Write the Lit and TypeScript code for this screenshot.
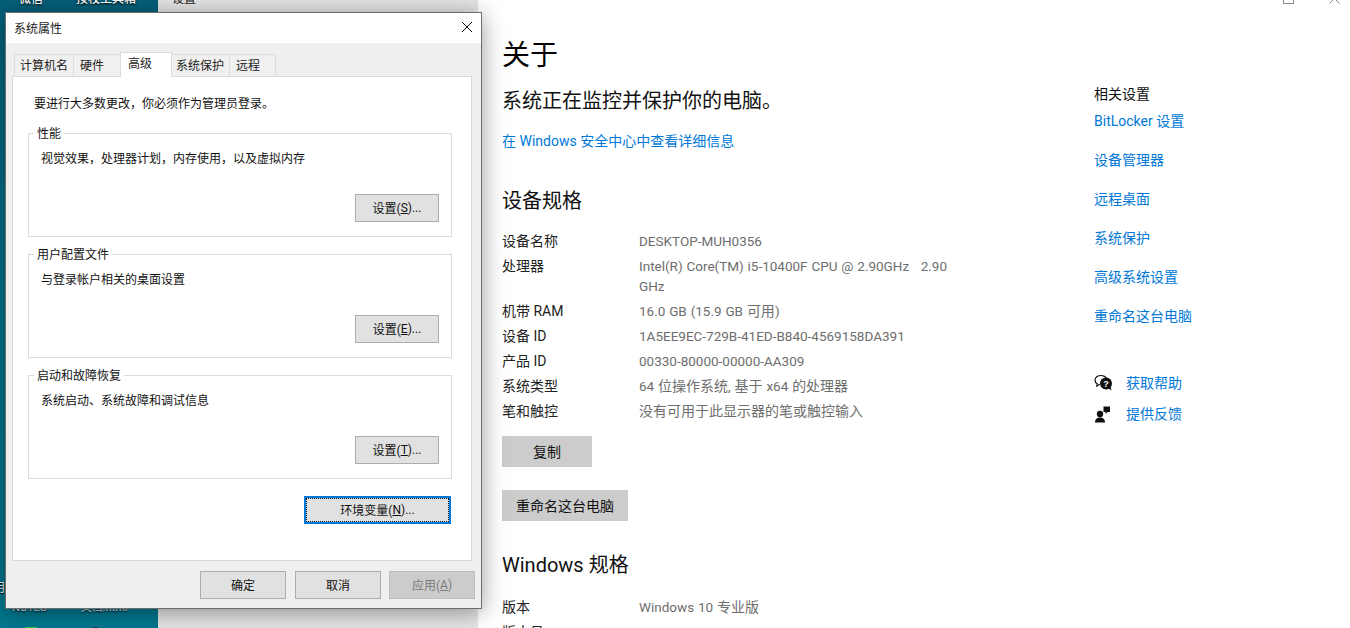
import { LitElement, html, css } from "lit";
import { customElement } from "lit/decorators.js";

const FONT = css`Roboto, "Noto Sans CJK SC", sans-serif`;

@customElement("sys-group")
class SysGroup extends LitElement {
  static properties = { title: {}, desc: {}, btn: {}, key: {} };
  title = "";
  desc = "";
  btn = "设置";
  key = "";
  static styles = css`
    :host { display: block; }
    .box { position: relative; height: 102px; border: 1px solid #dcdcdc; box-sizing: content-box; padding: 0 12px; display: flex; flex-direction: column; }
    .legend { position: absolute; left: 5px; top: -8px; background: #fff; padding: 0 3px; font-size: 12px; line-height: 17px; color: #111; }
    .desc { margin-top: 17px; font-size: 12px; line-height: 17px; color: #111; }
    .row { margin-top: auto; margin-bottom: 14px; display: flex; justify-content: flex-end; }
    .btn { width: 84px; height: 28px; box-sizing: border-box; border: 1px solid #adadad; background: #e1e1e1; padding-bottom: 1px; display: flex; align-items: center; justify-content: center; font-size: 12px; color: #111; white-space: pre; }
    u { text-underline-offset: 1px; }
  `;
  render() {
    return html`<div class="box">
      <span class="legend">${this.title}</span>
      <div class="desc">${this.desc}</div>
      <div class="row"><div class="btn">${this.btn}(<u>${this.key}</u>)...</div></div>
    </div>`;
  }
}

@customElement("app-root")
export class AppRoot extends LitElement {
  static styles = css`
    :host { display: block; width: 1350px; height: 628px; overflow: hidden; position: relative; background: #fff; font-family: ${FONT}; color: #111; }
    .desk { display: flex; height: 628px; }
    .wall { width: 158px; background: linear-gradient(180deg, #04607a 0%, #03738c 50%, #02788f 100%); color: #fff; font-size: 12px; display: flex; flex-direction: column; overflow: hidden; }
    .deskTop { display: flex; gap: 33px; padding-left: 19px; margin-top: -9px; line-height: 17px; font-weight: 500; text-shadow: 0 1px 2px #000; }
    .deskMid { margin-top: auto; margin-left: -7px; line-height: 14px; text-shadow: 0 1px 1px #000; }
    .deskBot { display: flex; gap: 34px; margin-top: 6px; padding-left: 12px; font-size: 11px; line-height: 14px; color: #dde; text-shadow: 0 1px 2px #000; }
    .deskIcons { display: flex; margin-top: 12px; padding-left: 25px; height: 1px; gap: 56px; flex: none; }
    .deskIcons i { display: block; height: 1px; }
    .deskIcons .g { width: 12px; background: #3fc13f; }
    .deskIcons .d { width: 5px; background: #1c3a48; }
    .settings { flex: 1; display: flex; flex-direction: column; min-width: 0; }
    .sTitle { height: 12px; display: flex; align-items: flex-end; position: relative; background: #e6e6e6; margin-right: 872px; }
    .sTitle span { font-size: 12px; line-height: 17px; margin: 0 0 4px 14px; color: #222; }
    .winBtns { position: absolute; top: -7px; right: -862px; display: flex; gap: 35px; }
    .winBtns svg { display: block; }
    .sBody { flex: 1; display: flex; min-height: 0; }
    .nav { width: 320px; background: #e6e6e6; flex: none; }
    .main { width: 592px; padding: 26px 0 0 24px; flex: none; box-sizing: border-box; }
    h1 { margin: 0; font-weight: 400; font-size: 28px; line-height: 36px; color: #000; }
    .lead { margin-top: 14px; font-size: 20px; line-height: 26px; color: #111; }
    a { color: #0078d7; text-decoration: none; }
    .secLink { display: block; margin-top: 17px; font-size: 14px; line-height: 20px; }
    h2 { margin: 0; font-weight: 400; font-size: 20px; line-height: 28px; color: #111; }
    .h2a { margin-top: 36px; }
    .specs { margin-top: 16px; display: grid; grid-template-columns: 137px 316px; font-size: 14px; line-height: 20px; row-gap: 5px; }
    .specs .k { color: #222; }
    .specs .v { color: #6e6e6e; white-space: pre-wrap; }
    .lat { font-size: 13.5px; line-height: 14px; word-spacing: .5px; }
    .gray { display: flex; align-items: center; justify-content: center; height: 31px; box-sizing: border-box; padding-bottom: 2px; background: #cccccc; font-size: 14px; color: #111; }
    .copy { width: 90px; margin-top: 15px; }
    .rename { width: 126px; margin-top: 23px; }
    .h2b { margin-top: 30px; }
    .specs2 { margin-top: 18px; }
    .side { flex: 1; padding: 72px 0 0 24px; font-size: 14px; }
    .sideH { line-height: 20px; color: #111; }
    .links { display: flex; flex-direction: column; gap: 19px; margin-top: 7px; }
    .links a { line-height: 20px; }
    .help { margin-top: 47px; display: flex; flex-direction: column; gap: 11px; }
    .help a { display: flex; align-items: center; gap: 13px; line-height: 20px; }
    .help svg { flex: none; display: block; }

    .dialog { position: absolute; left: 5px; top: 12px; width: 477px; height: 597px; box-sizing: border-box; background: #efefef; border: 1px solid #6d6d6d; box-shadow: 0 3px 22px rgba(0,0,0,.4); display: flex; flex-direction: column; font-size: 12px; }
    .dTitle { height: 30px; box-sizing: border-box; background: #fff; display: flex; align-items: center; justify-content: space-between; padding: 0 8px 2px 8px; color: #222; }
    .dTitle svg { display: block; }
    .tabs { height: 24px; margin-top: 9px; padding-left: 9px; display: flex; align-items: flex-end; }
    .tab { height: 22px; box-sizing: border-box; background: #f0f0f0; border: 1px solid #dcdcdc; border-bottom: 0; margin-left: -1px; padding-bottom: 2px; display: flex; align-items: center; font-size: 12px; color: #222; }
    .t1 { width: 60px; padding-left: 5px; }
    .t2 { width: 48px; padding-left: 6px; }
    .t3 { width: 52px; padding-left: 7px; }
    .t4 { width: 59px; padding-left: 4px; }
    .t5 { width: 47px; padding-left: 6px; }
    .tab.on { height: 25px; background: #fff; padding-bottom: 6px; position: relative; z-index: 1; margin-bottom: -1px; }
    .page { width: 460px; height: 485px; box-sizing: border-box; margin-left: 6px; background: #fff; border: 1px solid #d9d9d9; padding: 0 19px 0 15px; display: flex; flex-direction: column; }
    .notice { margin: 19px 0 0 6px; line-height: 17px; }
    .groups { margin-top: 20px; display: flex; flex-direction: column; gap: 17px; }
    .envRow { margin-top: 17px; display: flex; justify-content: flex-end; padding-right: 1px; }
    .env { width: 147px; height: 28px; box-sizing: border-box; border: 2px solid #0078d7; background: #e1e1e1; outline: 1px dotted #111; outline-offset: -3px; padding-bottom: 1px; display: flex; align-items: center; justify-content: center; white-space: pre; }
    .foot { flex: 1; display: flex; justify-content: flex-end; align-items: flex-start; gap: 8px; padding: 10px 6px 0 0; }
    .fbtn { width: 86px; height: 28px; box-sizing: border-box; border: 1px solid #adadad; background: #e1e1e1; padding-bottom: 1px; display: flex; align-items: center; justify-content: center; }
    .fbtn.first { margin-right: 1px; }
    .fbtn.dis { background: #cccccc; border-color: #bfbfbf; color: #7a7a7a; }
    u { text-underline-offset: 1px; }
  `;

  private latin(text: string) {
    return text.split(/([\x20-\x7e]+)/).map((part) =>
      /[\x21-\x7e]/.test(part) ? html`<span class="lat">${part}</span>` : part
    );
  }

  render() {
    const specs: [string, string][] = [
      ["设备名称", "DESKTOP-MUH0356"],
      ["处理器", "Intel(R) Core(TM) i5-10400F CPU @ 2.90GHz   2.90 GHz"],
      ["机带 RAM", "16.0 GB (15.9 GB 可用)"],
      ["设备 ID", "1A5EE9EC-729B-41ED-B840-4569158DA391"],
      ["产品 ID", "00330-80000-00000-AA309"],
      ["系统类型", "64 位操作系统, 基于 x64 的处理器"],
      ["笔和触控", "没有可用于此显示器的笔或触控输入"],
    ];
    const links = ["BitLocker 设置", "设备管理器", "远程桌面", "系统保护", "高级系统设置", "重命名这台电脑"];
    return html`
      <div class="desk">
        <div class="wall">
          <div class="deskTop"><span>微信</span><span>按校工具箱</span></div>
          <div class="deskMid">用</div>
          <div class="deskBot"><span>NOTES</span><span>文档.html</span></div>
          <div class="deskIcons"><i class="g"></i><i class="d"></i></div>
        </div>
        <div class="settings">
          <div class="sTitle">
            <span>设置</span>
            <div class="winBtns">
              <svg width="11" height="11" viewBox="0 0 11 11"><rect x=".5" y=".5" width="10" height="10" fill="none" stroke="#888"/></svg>
              <svg width="11" height="11" viewBox="0 0 11 11"><path d="M.5.5l10 10M10.500.5l-10 10" stroke="#888" fill="none"/></svg>
            </div>
          </div>
          <div class="sBody">
            <div class="nav"></div>
            <div class="main">
              <h1>关于</h1>
              <div class="lead">系统正在监控并保护你的电脑。</div>
              <a class="secLink" href="#">在 Windows 安全中心中查看详细信息</a>
              <h2 class="h2a">设备规格</h2>
              <div class="specs">
                ${specs.map(([k, v]) => html`<div class="k">${k}</div><div class="v">${this.latin(v)}</div>`)}
              </div>
              <div class="gray copy">复制</div>
              <div class="gray rename">重命名这台电脑</div>
              <h2 class="h2b">Windows 规格</h2>
              <div class="specs specs2">
                <div class="k">版本</div><div class="v">${this.latin("Windows 10 专业版")}</div>
                <div class="k">版本号</div><div class="v">${this.latin("20H2")}</div>
              </div>
            </div>
            <div class="side">
              <div class="sideH">相关设置</div>
              <div class="links">${links.map((l) => html`<a href="#">${l}</a>`)}</div>
              <div class="help">
                <a href="#">
                  <svg width="19" height="18" viewBox="0 0 19 18">
                    <path d="M7 1.500c-3.300 0-6 2-6 4.700 0 1.500.9 2.800 2.200 3.600L2.800 12l3-1.700" fill="#fff" stroke="#111" stroke-width="1.200"/>
                    <path d="M7 1.500c2.600 0 4.600 1.200 5.500 2.900" fill="none" stroke="#111" stroke-width="1.200"/>
                    <circle cx="12" cy="9.500" r="6" fill="#111"/>
                    <path d="M14 14l3.500 2.500-1-4z" fill="#111"/>
                    <text x="12" y="12.500" text-anchor="middle" font-size="9" font-weight="700" fill="#fff" font-family="Liberation Sans">?</text>
                  </svg>
                  获取帮助
                </a>
                <a href="#">
                  <svg width="19" height="18" viewBox="0 0 19 18">
                    <circle cx="6" cy="9" r="3.200" fill="#111"/>
                    <path d="M1 17.500c0-3.200 2.200-5 5-5s5 1.800 5 5z" fill="#111"/>
                    <path d="M9.500 1.500h6.500v5.500h-2.500l-2 2v-2h-2z" fill="#111"/>
                  </svg>
                  提供反馈
                </a>
              </div>
            </div>
          </div>
        </div>
      </div>

      <div class="dialog">
        <div class="dTitle">
          <span>系统属性</span>
          <svg width="12" height="12" viewBox="0 0 12 12"><path d="M1 1l10 10M11 1L1 11" stroke="#111" fill="none"/></svg>
        </div>
        <div class="tabs">
          <div class="tab t1">计算机名</div><div class="tab t2">硬件</div><div class="tab t3 on">高级</div><div class="tab t4">系统保护</div><div class="tab t5">远程</div>
        </div>
        <div class="page">
          <div class="notice">要进行大多数更改，你必须作为管理员登录。</div>
          <div class="groups">
            <sys-group title="性能" desc="视觉效果，处理器计划，内存使用，以及虚拟内存" key="S"></sys-group>
            <sys-group title="用户配置文件" desc="与登录帐户相关的桌面设置" key="E"></sys-group>
            <sys-group title="启动和故障恢复" desc="系统启动、系统故障和调试信息" key="T"></sys-group>
          </div>
          <div class="envRow"><div class="env">环境变量(<u>N</u>)...</div></div>
        </div>
        <div class="foot">
          <div class="fbtn first">确定</div>
          <div class="fbtn">取消</div>
          <div class="fbtn dis">应用(<u>A</u>)</div>
        </div>
      </div>
    `;
  }
}
void SysGroup;
